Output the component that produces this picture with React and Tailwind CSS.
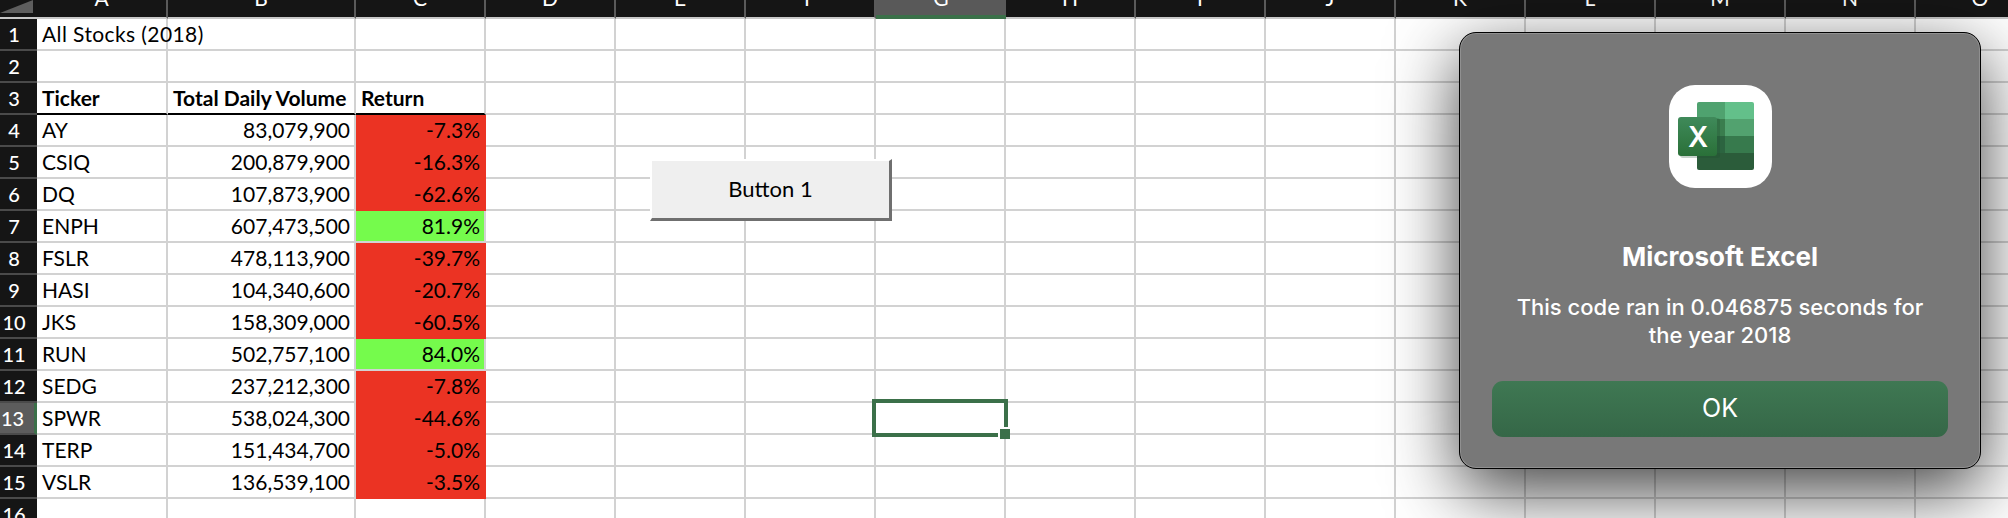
import React from 'react';

const COLS = ['A', 'B', 'C', 'D', 'E', 'F', 'G', 'H', 'I', 'J', 'K', 'L', 'M', 'N', 'O'];

const ROWS = [
  ['AY', '83,079,900', '-7.3%'],
  ['CSIQ', '200,879,900', '-16.3%'],
  ['DQ', '107,873,900', '-62.6%'],
  ['ENPH', '607,473,500', '81.9%'],
  ['FSLR', '478,113,900', '-39.7%'],
  ['HASI', '104,340,600', '-20.7%'],
  ['JKS', '158,309,000', '-60.5%'],
  ['RUN', '502,757,100', '84.0%'],
  ['SEDG', '237,212,300', '-7.8%'],
  ['SPWR', '538,024,300', '-44.6%'],
  ['TERP', '151,434,700', '-5.0%'],
  ['VSLR', '136,539,100', '-3.5%'],
];

function getCell(row, col) {
  if (row === 1 && col === 0) return { text: 'All Stocks (2018)', overflow: true };
  if (row === 3 && col === 0) return { text: 'Ticker', bold: true };
  if (row === 3 && col === 1) return { text: 'Total Daily Volume', bold: true };
  if (row === 3 && col === 2) return { text: 'Return', bold: true };
  if (row >= 4 && row <= 15 && col < 3) {
    const value = ROWS[row - 4][col];
    if (col === 0) return { text: value };
    if (col === 1) return { text: value, right: true };
    return { text: value, right: true, fill: value.startsWith('-') ? 'red' : 'green' };
  }
  return { text: '' };
}

function Cell({ row, col }) {
  const cell = getCell(row, col);
  const underline = row === 3 && col < 3;
  const selected = row === 13 && col === 6;

  return (
    <div
      className={[
        'relative flex items-center h-[32px] whitespace-nowrap border-b-2 border-r-2 border-[#d2d2d2]',
        cell.overflow ? 'border-r-0 pr-[2px] tracking-[0.4px]' : '',
        underline ? 'border-b-black' : '',
        cell.right ? 'justify-end pr-[4px]' : 'pl-[5px]',
        cell.fill === 'red' ? 'bg-[#eb3323] border-[#eb3323]' : '',
        cell.fill === 'green' ? 'bg-[#75fb4c] border-[#75fb4c]' : '',
        cell.bold ? 'font-bold' : '',
        selected ? 'z-10' : '',
      ].join(' ')}
    >
      {cell.text}
      {selected && (
        <div className="absolute left-[-4px] top-[-4px] w-[136px] h-[38px] border-4 border-[#3b7049]">
          <div className="absolute right-[-6px] bottom-[-6px] w-[12px] h-[12px] bg-[#3b7049] border-t-2 border-l-2 border-white" />
        </div>
      )}
    </div>
  );
}

function ExcelIcon() {
  return (
    <div className="w-[103px] h-[103px] rounded-[26px] bg-white">
      <svg width="103" height="103" viewBox="0 0 103 103">
        <defs>
          <linearGradient id="xbox" x1="0" y1="0" x2="0" y2="1">
            <stop offset="0" stopColor="#3f8a5a" />
            <stop offset="1" stopColor="#2a7038" />
          </linearGradient>
        </defs>
        <path d="M30 17h26v17H28v-15a2 2 0 0 1 2-2z" fill="#4fa26f" />
        <path d="M56 17h27a2 2 0 0 1 2 2v15H56z" fill="#63c08a" />
        <rect x="28" y="34" width="28" height="17" fill="#3a7d4e" />
        <rect x="56" y="34" width="29" height="17" fill="#52a26f" />
        <rect x="28" y="51" width="28" height="17" fill="#2c6440" />
        <rect x="56" y="51" width="29" height="17" fill="#377a4d" />
        <path d="M28 68h57v15a2 2 0 0 1-2 2H30a2 2 0 0 1-2-2z" fill="#2b5c3a" />
        <rect x="11" y="33" width="40" height="40" rx="3" fill="#1d4a2c" opacity="0.25" />
        <rect x="9" y="32" width="39" height="39" rx="3" fill="url(#xbox)" />
        <text
          x="29"
          y="62"
          textAnchor="middle"
          fill="#ffffff"
          fontSize="28"
          fontFamily="Inter, sans-serif"
          fontWeight="600"
        >
          X
        </text>
      </svg>
    </div>
  );
}

function Dialog() {
  return (
    <div className="absolute z-20 left-[1459px] top-[32px] w-[522px] h-[437px] rounded-[17px] bg-[#787878] border border-black shadow-[0_22px_70px_rgba(0,0,0,0.75),inset_0_0_0_1px_rgba(255,255,255,0.18)] flex flex-col items-center text-white font-['Inter',sans-serif]">
      <div className="mt-[52px]">
        <ExcelIcon />
      </div>
      <div className="mt-[53px] text-[26px] leading-[32px] font-bold">Microsoft Excel</div>
      <div className="mt-[20px] w-[440px] text-center text-[22px] leading-[28px] font-medium">
        This code ran in 0.046875 seconds for the year 2018
      </div>
      <button className="mt-[32px] w-[456px] h-[56px] rounded-[11px] bg-gradient-to-b from-[#3f7853] to-[#356747] text-[25px]">
        OK
      </button>
    </div>
  );
}

export default function App() {
  return (
    <div className="relative w-[2008px] h-[518px] overflow-hidden bg-white text-black text-[21px] font-['Lato',sans-serif]">
      <div className="flex w-[2100px] bg-[#151515]">
        <div className="w-[37px] h-[19px] overflow-hidden border-b-2 border-[#c8c8c8]">
          <div className="w-[33px] h-[13px] bg-[#5e5e5e] [clip-path:polygon(100%_0,100%_100%,0_100%)]" />
        </div>
        {COLS.map((col, i) => (
          <div
            key={col}
            className={[
              'flex items-end justify-center h-[19px] overflow-hidden text-white',
              i === 0 ? 'w-[131px]' : i === 1 ? 'w-[188px]' : 'w-[130px]',
              col === 'G'
                ? 'bg-[#595959] border-b-4 border-[#3b7049] border-r-0'
                : 'border-b-2 border-b-[#c8c8c8] border-r-2 border-r-[#5a5a5a]',
            ].join(' ')}
          >
            <span className={col === 'G' ? 'leading-[24px] pb-[5px]' : 'leading-[24px] pb-[7px]'}>{col}</span>
          </div>
        ))}
      </div>

      {Array.from({ length: 16 }, (_, r) => r + 1).map((row) => (
        <div key={row} className="flex w-[2100px]">
          <div
            className={[
              'flex items-center justify-center w-[37px] h-[32px] pr-[9px] border-b-2 border-[#4a4a4a] text-white text-[20px] font-medium',
              row === 13 ? 'bg-[#5c5c5c] pr-[6px] border-r-[3px] border-r-[#3b7049]' : 'bg-[#151515]',
            ].join(' ')}
          >
            {row}
          </div>
          <div className="grid grid-cols-[131px_188px_repeat(13,130px)]">
            {COLS.map((col, c) => (
              <Cell key={col} row={row} col={c} />
            ))}
          </div>
        </div>
      ))}

      <button className="absolute z-10 left-[650px] top-[159px] w-[242px] h-[62px] pb-[3px] bg-[#efefef] border-t-2 border-l-2 border-r-[3px] border-b-[3px] border-t-white border-l-white border-r-[#6f6f6f] border-b-[#6f6f6f] text-[22px]">
        Button 1
      </button>

      <Dialog />
    </div>
  );
}
